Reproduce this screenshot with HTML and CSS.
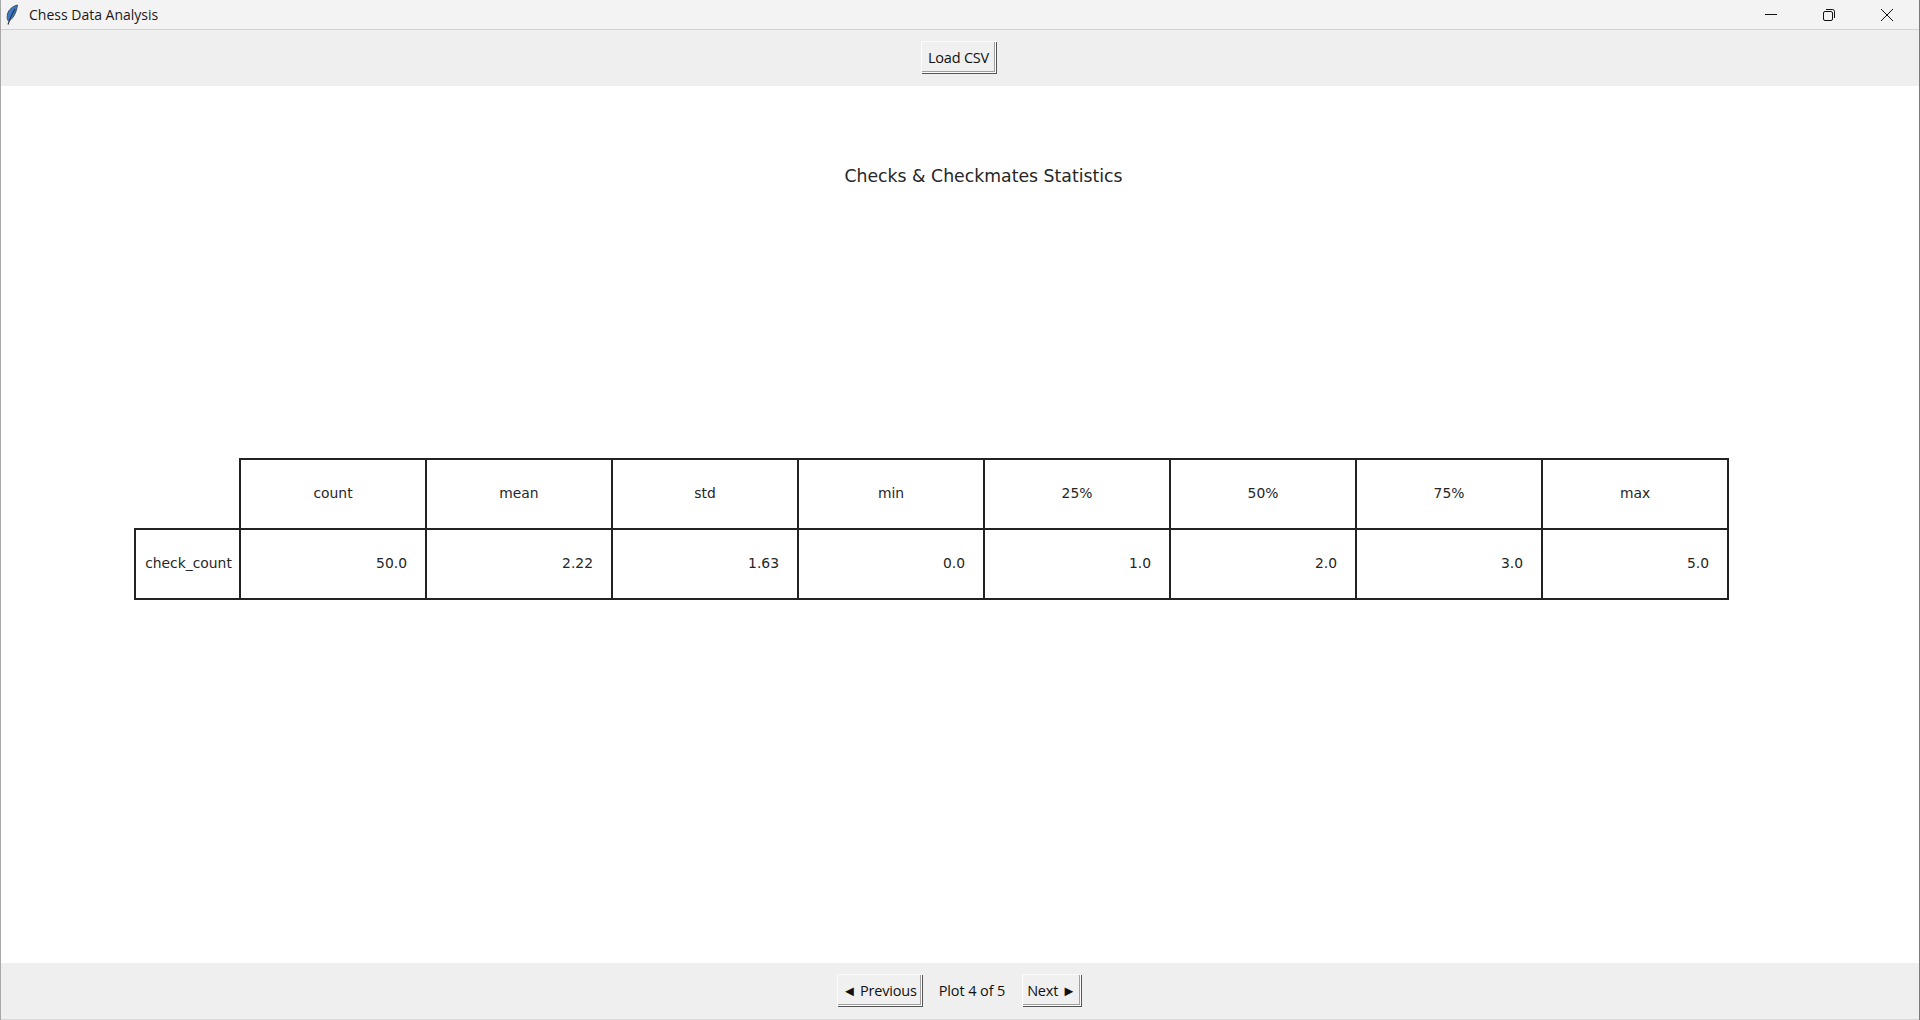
FILE: index.html
```html
<!DOCTYPE html>
<html lang="en">
<head>
  <meta charset="UTF-8" />
  <title>Chess Data Analysis</title>
  <link rel="stylesheet" href="styles.css">
</head>
<body>
  <div class="titlebar">
    <svg class="app-icon" width="16" height="22" viewBox="0 0 16 22">
      <path d="M11.500 1C7 2 2.500 5.500 1.500 10c-.6 3-.5 5 .8 7C7 15.500 10.500 8.500 11.500 1z" fill="#3a78c8" stroke="#46505a" stroke-width="1"/>
      <path d="M9 5C6.500 9 4 14 2 20.500" fill="none" stroke="#2a3440" stroke-width="1.200"/>
    </svg>
    <span class="window-title">Chess Data Analysis</span>
    <div class="window-buttons">
      <div class="win-btn">
        <svg width="14" height="14" viewBox="0 0 14 14"><path d="M1 6.500h12" stroke="#111" fill="none"/></svg>
      </div>
      <div class="win-btn">
        <svg width="14" height="14" viewBox="0 0 14 14"><rect x="1.500" y="3.500" width="9" height="9" rx="1.500" fill="none" stroke="#111"/><path d="M4 1.500h6.500a2 2 0 0 1 2 2V10" fill="none" stroke="#111"/></svg>
      </div>
      <div class="win-btn">
        <svg width="14" height="14" viewBox="0 0 14 14"><path d="M1 1l12 12M13 1L1 13" stroke="#111" fill="none"/></svg>
      </div>
    </div>
  </div>

  <div class="toolbar">
    <button class="tk-btn load-btn">Load CSV</button>
  </div>

  <div class="plot">
    <h1 class="plot-title">Checks &amp; Checkmates Statistics</h1>
    <table class="stats">
      <tr class="head-row">
        <td class="blank"></td>
        <td>count</td>
        <td>mean</td>
        <td>std</td>
        <td>min</td>
        <td>25%</td>
        <td>50%</td>
        <td>75%</td>
        <td>max</td>
      </tr>
      <tr>
        <td class="row-name">check_count</td>
        <td class="num">50.0</td>
        <td class="num">2.22</td>
        <td class="num">1.63</td>
        <td class="num">0.0</td>
        <td class="num">1.0</td>
        <td class="num">2.0</td>
        <td class="num">3.0</td>
        <td class="num">5.0</td>
      </tr>
    </table>
  </div>

  <div class="navbar">
    <button class="tk-btn prev-btn">◄ Previous</button>
    <span class="plot-label">Plot 4 of 5</span>
    <button class="tk-btn next-btn">Next ►</button>
  </div>
</body>
</html>
```

FILE: styles.css
```css
html, body {
  height: 100%;
}

body {
  margin: 0;
  height: 1020px;
  overflow: hidden;
  display: flex;
  flex-direction: column;
  background: #fff;
  font-family: "Open Sans", "Noto Sans", sans-serif;
  color: #111;
  border-left: 1px solid #a8a8a8;
  border-right: 1px solid #7a7a7a;
  box-sizing: border-box;
}

.titlebar {
  height: 29px;
  flex: none;
  display: flex;
  align-items: center;
  background: #f3f3f3;
  border-bottom: 1px solid #d2d2d2;
  padding-left: 5px;
  padding-right: 3px;
}

.app-icon {
  flex: none;
}

.window-title {
  margin-left: 7px;
  font-size: 14px;
  color: #1a1a1a;
}

.window-buttons {
  margin-left: auto;
  display: flex;
  align-self: stretch;
}

.win-btn {
  width: 58px;
  display: flex;
  align-items: center;
  justify-content: center;
}

.toolbar {
  height: 56px;
  flex: none;
  display: flex;
  align-items: center;
  justify-content: center;
  background: #efefef;
  padding-bottom: 2px;
  padding-right: 3px;
  box-sizing: border-box;
}

.tk-btn {
  height: 32px;
  padding: 0;
  background: #f0f0f0;
  border: 1px solid #fcfcfc;
  box-shadow: inset -1px -1px 0 #a0a0a0, 1px 1px 0 #555;
  font-family: "Open Sans", "Noto Sans", sans-serif;
  font-size: 14.500px;
  letter-spacing: -0.2px;
  color: #111;
}

.load-btn {
  width: 75px;
}

.plot {
  flex: 1;
  display: flex;
  flex-direction: column;
  align-items: flex-start;
  padding-left: 133px;
  font-family: "DejaVu Sans", sans-serif;
  color: #262626;
}

.plot-title {
  margin: 80px 0 0;
  width: 1699px;
  text-align: center;
  font-size: 17.300px;
  font-weight: normal;
  line-height: 20px;
}

.stats {
  margin-top: 272px;
  border-collapse: collapse;
  table-layout: fixed;
  font-size: 13.890px;
}

.stats td {
  width: 186px;
  height: 70px;
  padding: 0 18px 3px;
  box-sizing: border-box;
  border: 2px solid #222;
  text-align: center;
}

.stats .num {
  text-align: right;
}

.stats .blank {
  border: none;
  border-bottom: 2px solid #222;
}

.stats .blank,
.stats .row-name {
  width: 105px;
  padding: 0 0 3px 2px;
}

.navbar {
  height: 57px;
  flex: none;
  display: flex;
  align-items: center;
  justify-content: center;
  background: #efefef;
  border-bottom: 1px solid #d8d8d8;
  box-sizing: border-box;
  padding-right: 2px;
  padding-bottom: 2px;
}

.prev-btn {
  width: 85px;
}

.plot-label {
  width: 100px;
  text-align: center;
  font-size: 14.500px;
  letter-spacing: -0.1px;
}

.next-btn {
  width: 59px;
}
```
